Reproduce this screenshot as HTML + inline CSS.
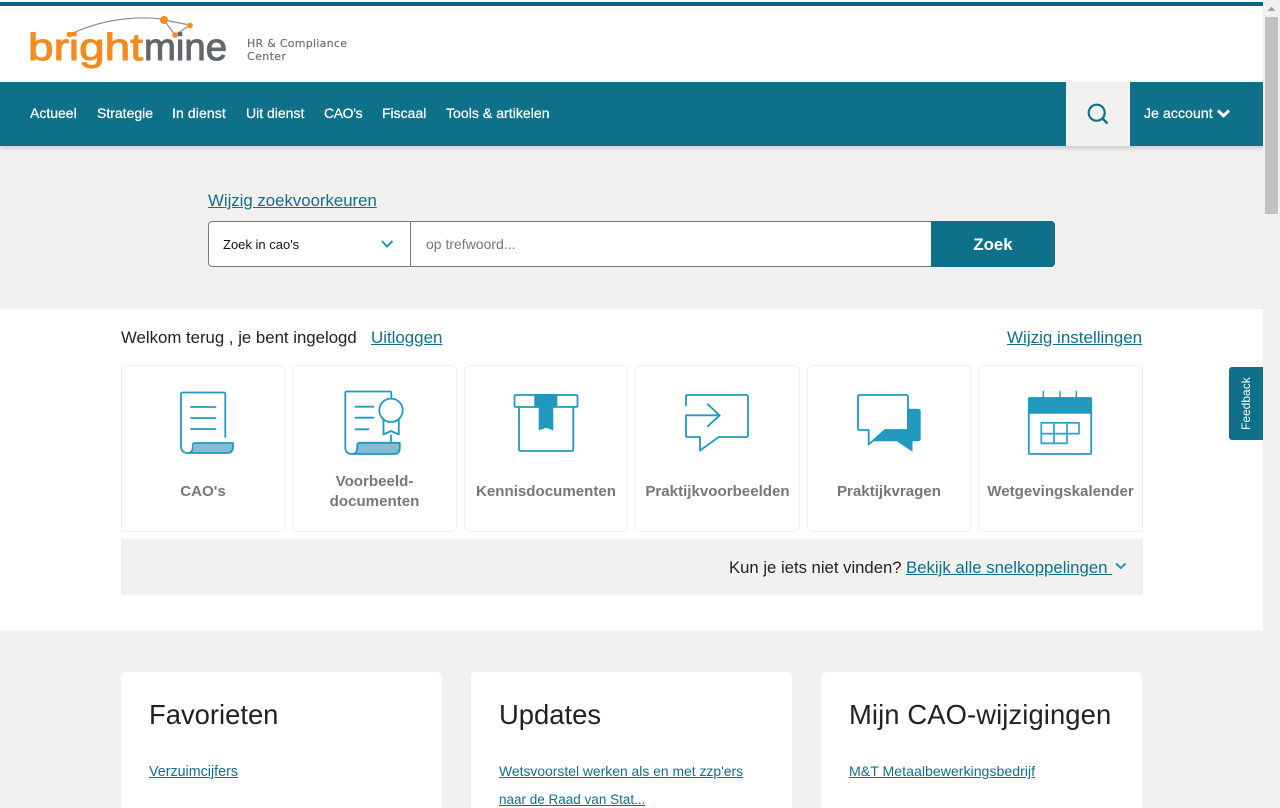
<!DOCTYPE html>
<html lang="nl">
<head>
<meta charset="utf-8">
<title>Brightmine HR &amp; Compliance Center</title>
<style>
html,body{margin:0;padding:0;width:1280px;height:808px;overflow:hidden;background:#f2f1f0;font-family:"Liberation Sans",Arial,sans-serif;color:#222}
.a{position:absolute;white-space:nowrap}
a{color:#0f7089;text-decoration:underline}
#page{position:relative;width:1280px;height:808px;overflow:hidden}
#hdr{left:0;top:0;width:1263px;height:82px;background:#fff}
#strip{left:0;top:2px;width:1263px;height:4px;background:#0b6680}
#nav{left:0;top:82px;width:1263px;height:64px;background:#0f7089;box-shadow:0 2px 5px rgba(0,0,0,.18)}
.n{top:104px;line-height:18px;font-size:14px;color:#fff;text-decoration:none;-webkit-text-stroke:.25px #fff}
#sbtn{left:1066px;top:82px;width:64px;height:64px;background:#f2f1f0}
#sel{left:208px;top:221px;width:201px;height:44px;background:#fff;border:1px solid #777;border-radius:4px 0 0 4px}
#inp{left:411px;top:221px;width:520px;height:44px;background:#fff;border-top:1px solid #777;border-bottom:1px solid #777}
#btn{left:931px;top:221px;width:124px;height:46px;background:#0f7089;border-radius:0 4px 4px 0;color:#fff;font-weight:bold;font-size:16.800px;line-height:48px;text-align:center}
#white{left:0;top:309px;width:1263px;height:321px;background:#fff}
.card{top:365px;height:165px;background:#fff;border:1px solid #efefef;border-radius:5px}
.lb{top:366px;font-size:15.100px;font-weight:bold;color:#777;text-align:center;line-height:20px;white-space:normal}
#bar{left:121px;top:539px;width:1022px;height:56px;background:#f2f1f0}
.box{top:672px;width:321px;height:136px;background:#fff;border-radius:5px 5px 0 0}
.h{top:697px;font-size:27.400px;line-height:36px;color:#222}
.l{line-height:18px}
#fb{left:1229px;top:367px;width:34px;height:73px;background:#0f7089;border-radius:3px 0 0 3px}
#fbt{left:1229px;top:367px;width:34px;height:73px;color:#fff;font-size:12px;line-height:34px;writing-mode:vertical-rl;transform:rotate(180deg);text-align:center}
#sb{left:1263px;top:0;width:17px;height:808px;background:#f1f1f1}
#th{left:1265px;top:17px;width:13px;height:197px;background:#c1c1c1}
svg{position:absolute;overflow:visible}
.i{fill:none;stroke:#2199bf;stroke-width:1.8;stroke-linejoin:round;stroke-linecap:round}
</style>
</head>
<body>
<div id="page">
<div class="a" id="hdr"></div>
<div class="a" id="strip"></div>

<svg style="left:0;top:0" width="360" height="80" viewBox="0 0 360 80">
  <path d="M73 33 Q115 14 163 19" fill="none" stroke="#8d8f91" stroke-width="1.2"/>
  <path d="M164 20 L190 25 L175 35 Z" fill="none" stroke="#8d8f91" stroke-width="1.2"/>
  <circle cx="164" cy="20" r="4" fill="#f58a1f"/>
  <circle cx="190" cy="25.500" r="2.800" fill="#f58a1f"/>
  <circle cx="175" cy="35" r="2.800" fill="#f58a1f"/>
  <circle cx="69.500" cy="34.500" r="2.800" fill="#f58a1f"/>
  <text x="28" y="60" font-family="Liberation Sans" font-size="38" fill="#f58a1f" textLength="115" lengthAdjust="spacingAndGlyphs" stroke="#f58a1f" stroke-width="1">bright</text>
  <text x="144" y="60" font-family="Liberation Sans" font-size="38" fill="#63666a" textLength="83" lengthAdjust="spacingAndGlyphs" stroke="#63666a" stroke-width="1">mine</text>
  <text x="247" y="47" font-family="DejaVu Sans" font-size="11" fill="#6b6d70" stroke="#6b6d70" stroke-width=".15" textLength="100">HR &amp; Compliance</text>
  <text x="247" y="60" font-family="DejaVu Sans" font-size="11" fill="#6b6d70" stroke="#6b6d70" stroke-width=".15" textLength="39">Center</text>
</svg>

<div class="a" id="nav"></div>
<a class="a n" style="left:30px" href="#">Actueel</a>
<a class="a n" style="left:97px" href="#">Strategie</a>
<a class="a n" style="left:172px;letter-spacing:.1px" href="#">In dienst</a>
<a class="a n" style="left:246px" href="#">Uit dienst</a>
<a class="a n" style="left:324px;letter-spacing:-.4px" href="#">CAO’s</a>
<a class="a n" style="left:382px" href="#">Fiscaal</a>
<a class="a n" style="left:446px;letter-spacing:.05px" href="#">Tools &amp; artikelen</a>
<div class="a" id="sbtn"></div>
<svg style="left:1080px;top:95px" width="40" height="40" viewBox="1080 95 40 40">
  <circle cx="1096.700" cy="112.700" r="8" fill="none" stroke="#0f7089" stroke-width="2.200"/>
  <path d="M1102.500 118.500 L1107.500 123.500" stroke="#0f7089" stroke-width="2.400" fill="none"/>
</svg>
<a class="a n" style="left:1144px;letter-spacing:.1px" href="#">Je account</a>
<svg style="left:1215px;top:105px" width="18" height="16" viewBox="1215 105 18 16">
  <path d="M1218 110.500 L1223.500 115.800 L1229 110.500" fill="none" stroke="#fff" stroke-width="3"/>
</svg>

<a class="a" style="left:208px;top:191px;font-size:16.800px;line-height:20px" href="#">Wijzig zoekvoorkeuren</a>
<div class="a" id="sel"></div>
<div class="a" id="inp"></div>
<div class="a" style="left:223px;top:236px;font-size:13px;line-height:18px;color:#111">Zoek in cao's</div>
<svg style="left:378px;top:236px" width="18" height="16" viewBox="378 236 18 16">
  <path d="M382 241 L387 246.500 L392.500 241" fill="none" stroke="#2199bf" stroke-width="2"/>
</svg>
<div class="a" style="left:426px;top:235px;font-size:14px;line-height:18px;color:#777">op trefwoord...</div>
<div class="a" id="btn">Zoek</div>

<div class="a" id="white"></div>
<div class="a" style="left:121px;top:328px;font-size:16.800px;line-height:20px;color:#222">Welkom terug , je bent ingelogd</div>
<a class="a" style="left:371px;top:328px;font-size:16.900px;line-height:20px" href="#">Uitloggen</a>
<a class="a" style="left:1007px;top:328px;font-size:17px;line-height:20px" href="#">Wijzig instellingen</a>

<div class="a card" style="left:121px;width:162px"></div>
<div class="a card" style="left:292px;width:163px"></div>
<div class="a card" style="left:464px;width:162px"></div>
<div class="a card" style="left:635px;width:163px"></div>
<div class="a card" style="left:807px;width:162px"></div>
<div class="a card" style="left:978px;width:163px"></div>

<svg style="left:170px;top:385px" width="70" height="75" viewBox="170 385 70 75">
  <path d="M194 443 H232 Q233 443 233 444.500 V447 Q233 453 227 453 H188 Q195 453 194 443Z" fill="#86bcd1"/>
  <path class="i" d="M225.300 437 V394 Q225.300 392.500 223.800 392.500 H182.500 Q181 392.500 181 394 V446 Q181 453 188 453 H227 Q233 453 233 447 V443 H195 Q192.800 443 192.800 445 V447 Q192.500 453 188 453"/>
  <path class="i" d="M191 407 H215.500 M191 418 H215.500 M191 429 H215.500"/>
</svg>

<svg style="left:338px;top:385px" width="70" height="75" viewBox="338 385 70 75">
  <path d="M358 443 H399.500 V448 Q399.500 454 394 454 H352 Q358 453 358 443Z" fill="#86bcd1"/>
  <path class="i" d="M391.300 397.500 V392.800 Q391.300 391.500 390 391.500 H346.800 Q345.300 391.500 345.300 393 V447 Q345.300 454 352 454 H394 Q399.800 454 399.800 448 V442.800 H359.500 Q357.300 442.800 357.300 445 V447 Q357 454 352 454"/>
  <circle class="i" cx="391" cy="410.300" r="11.700"/>
  <path class="i" d="M383.500 420 V434.500 L391 431 L398.800 434.500 V420"/>
  <path class="i" d="M391 435.500 V442.500"/>
  <path class="i" d="M355.500 406.700 H373.500 M355.500 417.700 H373.500 M355.500 429.300 H368.500"/>
</svg>

<svg style="left:508px;top:388px" width="76" height="70" viewBox="508 388 76 70">
  <path d="M534.300 394 H557.300 V407.500 H553.300 V430.500 L546 427.700 L538.700 430.500 V407.500 H534.300Z" fill="#2199bf"/>
  <path class="i" d="M516 395 H576 Q577.500 395 577.500 396.500 V405.500 Q577.500 407 576 407 H516 Q514.500 407 514.500 405.500 V396.500 Q514.500 395 516 395Z"/>
  <path class="i" d="M519 407 V449 Q519 451 521 451 H571.500 Q573.300 451 573.300 449 V407"/>
</svg>

<svg style="left:680px;top:388px" width="76" height="70" viewBox="680 388 76 70">
  <path class="i" d="M686 405.500 V396.500 Q686 395 687.500 395 H746.500 Q748 395 748 396.500 V435.500 Q748 437 746.500 437 H718.700 L700 450.500 V437 H687.500 Q686 437 686 435.500 V415.300 H719.500"/>
  <path class="i" d="M707.700 404.300 L719.700 415.300 L707.700 426.300"/>
</svg>

<svg style="left:852px;top:388px" width="76" height="70" viewBox="852 388 76 70">
  <path d="M907 408.700 H918 Q920.700 408.700 920.700 411.400 V438.600 Q920.700 441.300 918 441.300 H912.500 V451.700 L896.700 441.300 H871 L885 429.500 H907Z" fill="#2199bf"/>
  <path class="i" d="M859.500 395 H906.500 Q908 395 908 396.500 V428.500 Q908 430 906.500 430 H885 L868.700 444.500 V430 H859.500 Q858 430 858 428.500 V396.500 Q858 395 859.500 395Z"/>
</svg>

<svg style="left:1022px;top:388px" width="76" height="72" viewBox="1022 388 76 72">
  <path d="M1030.500 397.300 H1089.500 Q1091.700 397.300 1091.700 399.500 V413.700 H1028.300 V399.500 Q1028.300 397.300 1030.500 397.300Z" fill="#2199bf"/>
  <path class="i" d="M1029.500 398 H1090.500 Q1091.200 398 1091.200 399 V453 Q1091.200 454 1090.200 454 H1029.800 Q1028.800 454 1028.800 453 V399 Q1028.800 398 1029.500 398Z"/>
  <path class="i" style="stroke-width:1.400" d="M1043.300 391.500 V397 M1060 391.500 V397 M1076.300 391.500 V397"/>
  <path class="i" style="stroke:#3ba3c6;stroke-linejoin:miter" d="M1041.300 422.800 H1079 V433.700 H1041.300Z M1054 422.800 V443.300 M1067 422.800 V443.300 M1041.300 433.700 V443.300 H1067"/>
</svg>

<div class="a lb" style="left:121px;width:164px;padding-top:116px">CAO's</div>
<div class="a lb" style="left:292px;width:165px;padding-top:106px">Voorbeeld-<br>documenten</div>
<div class="a lb" style="left:464px;width:164px;padding-top:116px">Kennisdocumenten</div>
<div class="a lb" style="left:635px;width:165px;padding-top:116px">Praktijkvoorbeelden</div>
<div class="a lb" style="left:807px;width:164px;padding-top:116px">Praktijkvragen</div>
<div class="a lb" style="left:978px;width:165px;padding-top:116px">Wetgevingskalender</div>

<div class="a" id="bar"></div>
<div class="a" style="left:729px;top:558px;font-size:16.700px;line-height:20px;color:#222">Kun je iets niet vinden?</div>
<a class="a" style="left:906px;top:558px;font-size:16.800px;line-height:20px" href="#">Bekijk alle snelkoppelingen&nbsp;</a>
<svg style="left:1112px;top:559px" width="18" height="14" viewBox="1112 559 18 14">
  <path d="M1116 563.500 L1120.800 568 L1125.500 563.500" fill="none" stroke="#2199bf" stroke-width="2"/>
</svg>

<div class="a box" style="left:121px"></div>
<div class="a box" style="left:471px"></div>
<div class="a box" style="left:821px"></div>
<div class="a h" style="left:149px">Favorieten</div>
<div class="a h" style="left:499px">Updates</div>
<div class="a h" style="left:849px;letter-spacing:.1px">Mijn CAO-wijzigingen</div>
<a class="a l" style="left:149px;top:763px;font-size:14.300px" href="#">Verzuimcijfers</a>
<a class="a l" style="left:499px;top:762px;font-size:13.900px" href="#">Wetsvoorstel werken als en met zzp'ers</a>
<a class="a l" style="left:499px;top:791px;font-size:13.500px" href="#">naar de Raad van Stat...</a>
<a class="a l" style="left:849px;top:762px;font-size:14.150px" href="#">M&amp;T Metaalbewerkingsbedrijf</a>

<div class="a" id="fb"></div>
<div class="a" id="fbt">Feedback</div>

<div class="a" id="sb"></div>
<div class="a" id="th"></div>
<svg style="left:1263px;top:0" width="17" height="17" viewBox="0 0 17 17"><path d="M4.500 11 L8.500 6.500 L12.500 11Z" fill="#a3a3a3"/></svg>
</div>
</body>
</html>
